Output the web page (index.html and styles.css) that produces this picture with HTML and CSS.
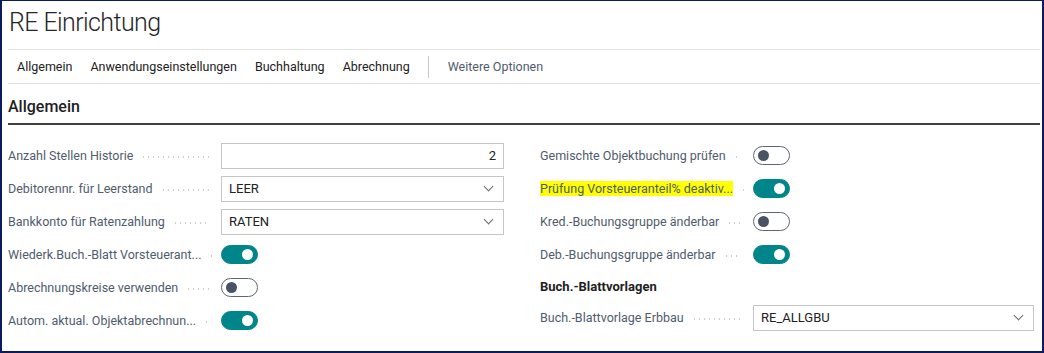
FILE: index.html
```html
<!DOCTYPE html>
<html lang="de">
<head>
    <meta charset="UTF-8">
    <title>RE Einrichtung</title>
    <link rel="stylesheet" href="styles.css">
</head>
<body>
    <div class="frame">
        <h1 class="page-title">RE Einrichtung</h1>

        <nav class="action-bar">
            <span class="action">Allgemein</span>
            <span class="action">Anwendungseinstellungen</span>
            <span class="action">Buchhaltung</span>
            <span class="action">Abrechnung</span>
            <span class="action-sep"></span>
            <span class="action more">Weitere Optionen</span>
        </nav>

        <h2 class="group-title">Allgemein</h2>

        <div class="group">
            <div class="col">
                <div class="field">
                    <span class="caption">Anzahl Stellen Historie</span>
                    <div class="input num">2</div>
                </div>
                <div class="field">
                    <span class="caption">Debitorennr. für Leerstand</span>
                    <div class="input select">LEER<span class="chevron"></span></div>
                </div>
                <div class="field">
                    <span class="caption">Bankkonto für Ratenzahlung</span>
                    <div class="input select">RATEN<span class="chevron"></span></div>
                </div>
                <div class="field">
                    <span class="caption">Wiederk.Buch.-Blatt Vorsteuerant...</span>
                    <span class="toggle on"></span>
                </div>
                <div class="field">
                    <span class="caption">Abrechnungskreise verwenden</span>
                    <span class="toggle"></span>
                </div>
                <div class="field">
                    <span class="caption">Autom. aktual. Objektabrechnun...</span>
                    <span class="toggle on"></span>
                </div>
            </div>

            <div class="col">
                <div class="field">
                    <span class="caption">Gemischte Objektbuchung prüfen</span>
                    <span class="toggle"></span>
                </div>
                <div class="field">
                    <span class="caption"><mark>Prüfung Vorsteueranteil% deaktiv...</mark></span>
                    <span class="toggle on"></span>
                </div>
                <div class="field">
                    <span class="caption">Kred.-Buchungsgruppe änderbar</span>
                    <span class="toggle"></span>
                </div>
                <div class="field">
                    <span class="caption">Deb.-Buchungsgruppe änderbar</span>
                    <span class="toggle on"></span>
                </div>
                <h3 class="sub-title">Buch.-Blattvorlagen</h3>
                <div class="field">
                    <span class="caption">Buch.-Blattvorlage Erbbau</span>
                    <div class="input select">RE_ALLGBU<span class="chevron"></span></div>
                </div>
            </div>
        </div>
    </div>
</body>
</html>
```

FILE: styles.css
```css
* {
    box-sizing: border-box;
}
body {
    margin: 0;
    font-family: Roboto, "Open Sans", sans-serif;
    color: #212121;
    background: #fff;
}
.frame {
    width: 1044px;
    height: 353px;
    border: 2px solid #0c1a5e;
    border-top-width: 1px;
    padding: 0 2px 0 6px;
    overflow: hidden;
}
.page-title {
    margin: 0;
    padding: 4px 0 0 1px;
    height: 49px;
    font-size: 25px;
    font-weight: 300;
    letter-spacing: -0.6px;
    line-height: 36px;
    color: #262626;
    border-bottom: 1px solid #e1e1e1;
}
.action-bar {
    display: flex;
    align-items: center;
    height: 34px;
    padding-left: 9px;
    border-bottom: 1px solid #e1e1e1;
    font-size: 12.5px;
}
.action {
    margin-right: 18px;
    color: #212121;
}
.action-sep {
    width: 1px;
    height: 22px;
    background: #c8c8c8;
    margin-right: 19px;
}
.action.more {
    color: #505c6d;
}
.group-title {
    margin: 0;
    height: 41px;
    padding-top: 13px;
    font-size: 16px;
    font-weight: 500;
    line-height: 20px;
    color: #212121;
    border-bottom: 2px solid #404040;
}
.group {
    display: grid;
    grid-template-columns: 496px 494px;
    column-gap: 36px;
    padding-top: 14px;
}
.field {
    display: flex;
    align-items: center;
    height: 33px;
}
.caption {
    display: flex;
    align-items: center;
    width: 213px;
    flex: none;
    font-size: 12.5px;
    color: #505c6d;
    white-space: nowrap;
    overflow: hidden;
}
.caption::after {
    content: "";
    flex: 1;
    min-width: 6px;
    height: 2px;
    margin: 3px 12px 0 8px;
    background-image: radial-gradient(circle, #cfcfcf 0.8px, transparent 1px);
    background-size: 5px 2px;
}
.caption mark {
    background: #ffff00;
    color: #505c6d;
}
.input {
    position: relative;
    width: 283px;
    height: 26px;
    border: 1px solid #c6c6c6;
    padding: 0 7px;
    font-size: 13px;
    line-height: 24px;
    color: #212121;
}
.input.num {
    text-align: right;
}
.chevron {
    position: absolute;
    right: 11px;
    top: 6px;
    width: 7px;
    height: 7px;
    border-right: 1px solid #6b6b6b;
    border-bottom: 1px solid #6b6b6b;
    transform: rotate(45deg);
}
.toggle {
    position: relative;
    display: inline-block;
    flex: none;
    width: 37px;
    height: 19px;
    border: 1px solid #5e6675;
    border-radius: 10px;
    background: #fff;
}
.toggle::after {
    content: "";
    position: absolute;
    top: 3px;
    left: 4px;
    width: 11px;
    height: 11px;
    border-radius: 50%;
    background: #4a5366;
}
.toggle.on {
    background: #00858a;
    border-color: #00858a;
}
.toggle.on::after {
    left: auto;
    right: 4px;
    background: #fff;
}
.sub-title {
    margin: 0;
    height: 30px;
    padding-top: 6px;
    font-size: 13px;
    font-weight: 700;
    line-height: 20px;
    color: #212121;
}
```
